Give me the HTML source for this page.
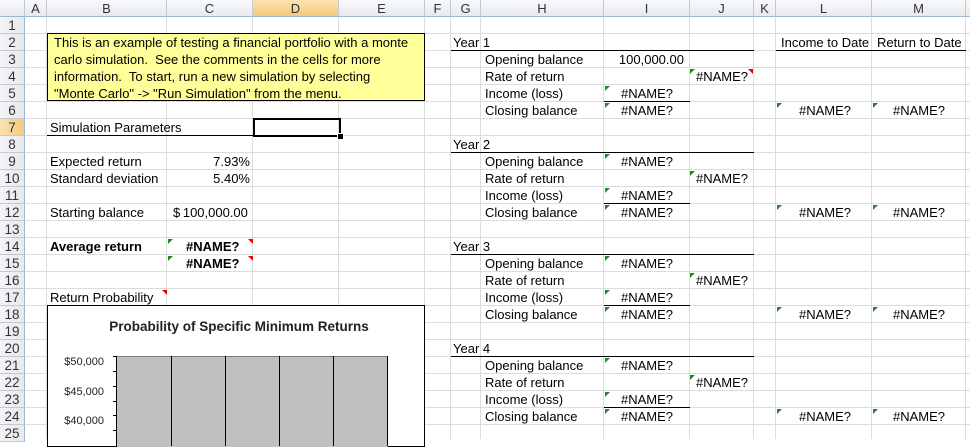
<!DOCTYPE html>
<html><head><meta charset="utf-8"><style>
body{margin:0;width:970px;height:439px;overflow:hidden;background:#fff;font-family:"Liberation Sans",Arial,sans-serif;position:relative}
.a{position:absolute}
.t{position:absolute;height:17px;line-height:17px;font-size:13px;white-space:nowrap;color:#000}
.b{font-weight:bold}
.vl{position:absolute;top:17px;bottom:0;width:1px;background:#dadcdd}
.hd{position:absolute;top:0;height:17px;line-height:17px;font-size:13px;text-align:center;color:#333;background:linear-gradient(#f9fafb,#e6e9ee);border-right:1px solid #c5c9cf;border-bottom:1px solid #9eb6ce;box-sizing:border-box}
.rh{position:absolute;left:0;width:25px;height:17px;line-height:17px;font-size:13.5px;text-align:center;color:#333;background:linear-gradient(90deg,#f3f4f6,#e6e9ee);border-right:1px solid #9eb6ce;border-bottom:1px solid #c5c9cf;box-sizing:border-box}
.g{position:absolute;width:0;height:0;border-top:5px solid #218a21;border-right:5px solid transparent}
.r{position:absolute;width:0;height:0;border-top:5px solid #e00;border-left:5px solid transparent}
.ln{position:absolute;height:1px;background:#000}
.yl{position:absolute;left:50px;width:54px;text-align:right;font-size:11px;line-height:12px;color:#222}
</style></head><body>
<div class="a" style="left:0;top:17px;width:970px;height:422px;background:repeating-linear-gradient(#fff 0,#fff 16px,#dadcdd 16px,#dadcdd 17px)"></div>
<div class="vl" style="left:46px"></div><div class="vl" style="left:166px"></div><div class="vl" style="left:252px"></div><div class="vl" style="left:338px"></div><div class="vl" style="left:424px"></div><div class="vl" style="left:450px"></div><div class="vl" style="left:480px"></div><div class="vl" style="left:603px"></div><div class="vl" style="left:689px"></div><div class="vl" style="left:753px"></div><div class="vl" style="left:775px"></div><div class="vl" style="left:871px"></div><div class="vl" style="left:965px"></div>

<div class="hd" style="left:0;width:25px"></div>
<div class="hd" style="left:25px;width:22px">A</div>
<div class="hd" style="left:47px;width:120px">B</div>
<div class="hd" style="left:167px;width:86px">C</div>
<div class="hd" style="left:253px;width:86px;background:linear-gradient(#fbe3b2,#f5c97b)">D</div>
<div class="hd" style="left:339px;width:86px">E</div>
<div class="hd" style="left:425px;width:26px">F</div>
<div class="hd" style="left:451px;width:30px">G</div>
<div class="hd" style="left:481px;width:123px">H</div>
<div class="hd" style="left:604px;width:86px">I</div>
<div class="hd" style="left:690px;width:64px">J</div>
<div class="hd" style="left:754px;width:22px">K</div>
<div class="hd" style="left:776px;width:96px">L</div>
<div class="hd" style="left:872px;width:94px">M</div>
<div class="hd" style="left:966px;width:10px"></div>

<div class="rh" style="top:17px">1</div><div class="rh" style="top:34px">2</div><div class="rh" style="top:51px">3</div><div class="rh" style="top:68px">4</div><div class="rh" style="top:85px">5</div><div class="rh" style="top:102px">6</div><div class="rh" style="top:119px;background:linear-gradient(90deg,#fbe3b2,#f5c97b)">7</div><div class="rh" style="top:136px">8</div><div class="rh" style="top:153px">9</div><div class="rh" style="top:170px">10</div><div class="rh" style="top:187px">11</div><div class="rh" style="top:204px">12</div><div class="rh" style="top:221px">13</div><div class="rh" style="top:238px">14</div><div class="rh" style="top:255px">15</div><div class="rh" style="top:272px">16</div><div class="rh" style="top:289px">17</div><div class="rh" style="top:306px">18</div><div class="rh" style="top:323px">19</div><div class="rh" style="top:340px">20</div><div class="rh" style="top:357px">21</div><div class="rh" style="top:374px">22</div><div class="rh" style="top:391px">23</div><div class="rh" style="top:408px">24</div><div class="rh" style="top:425px">25</div>

<!-- yellow note -->
<div class="a" style="left:47px;top:33px;background:#ffff99;border:1px solid #000;font-size:13px;line-height:17px;padding:0 0 0 6px;box-sizing:border-box;width:378px;height:68px;white-space:nowrap;overflow:hidden">This is an example of testing a financial portfolio with a monte<br>carlo simulation.&nbsp; See the comments in the cells for more<br>information.&nbsp; To start, run a new simulation by selecting<br>"Monte Carlo" -&gt; "Run Simulation" from the menu.</div>

<div class="t" style="left:50px;top:119px">Simulation Parameters</div>
<div class="ln" style="left:47px;top:135px;width:206px"></div>
<div class="a" style="left:253px;top:118px;width:84px;height:15px;border:2px solid #000"></div>
<div class="a" style="left:337px;top:133px;width:5px;height:5px;background:#000;border:1px solid #fff"></div>
<div class="t" style="left:50px;top:153px">Expected return</div><div class="t" style="right:720px;top:153px">7.93%</div>
<div class="t" style="left:50px;top:170px">Standard deviation</div><div class="t" style="right:720px;top:170px">5.40%</div>
<div class="t" style="left:50px;top:204px">Starting balance</div><div class="t" style="left:173px;top:204px">$&thinsp;100,000.00</div>
<div class="t b" style="left:50px;top:238px">Average return</div><div class="t b" style="left:186px;top:238px">#NAME?</div>
<div class="g" style="left:168px;top:239px"></div><div class="r" style="left:248px;top:239px"></div>
<div class="t b" style="left:186px;top:255px">#NAME?</div>
<div class="g" style="left:168px;top:256px"></div><div class="r" style="left:248px;top:256px"></div>
<div class="t" style="left:50px;top:289px">Return Probability</div><div class="r" style="left:162px;top:290px"></div>

<!-- chart -->
<div class="a" style="left:47px;top:305px;width:376px;height:140px;background:#fff;border:1px solid #000"></div>
<div class="a b" style="left:47px;top:319px;width:384px;text-align:center;font-size:13.5px;color:#222">Probability of Specific Minimum Returns</div>
<div class="yl" style="top:356px">$50,000</div>
<div class="yl" style="top:386px">$45,000</div>
<div class="yl" style="top:415px">$40,000</div>
<div class="a" style="left:117px;top:356px;width:271px;height:90px;background:#c0c0c0;border-top:1px solid #808080"></div>
<div class="a" style="left:116px;top:356px;width:1px;height:90px;background:#000"></div>
<div class="a" style="left:113px;top:356px;width:4px;height:1px;background:#000"></div>
<div class="a" style="left:113px;top:371px;width:4px;height:1px;background:#000"></div>
<div class="a" style="left:113px;top:386px;width:4px;height:1px;background:#000"></div>
<div class="a" style="left:113px;top:401px;width:4px;height:1px;background:#000"></div>
<div class="a" style="left:113px;top:415px;width:4px;height:1px;background:#000"></div>
<div class="a" style="left:113px;top:430px;width:4px;height:1px;background:#000"></div>
<div class="a" style="left:171px;top:356px;width:1px;height:90px;background:#000"></div>
<div class="a" style="left:225px;top:356px;width:1px;height:90px;background:#000"></div>
<div class="a" style="left:279px;top:356px;width:1px;height:90px;background:#000"></div>
<div class="a" style="left:333px;top:356px;width:1px;height:90px;background:#000"></div>
<div class="a" style="left:387px;top:356px;width:1px;height:90px;background:#000"></div>

<!-- right headers -->
<div class="t" style="left:781px;top:34px">Income to Date</div>
<div class="t" style="left:877px;top:34px">Return to Date</div>
<div class="ln" style="left:776px;top:50px;width:190px"></div>

<!-- Year 1 -->
<div class="t" style="left:453px;top:34px">Year 1</div><div class="ln" style="left:451px;top:50px;width:303px"></div>
<div class="t" style="left:485px;top:51px">Opening balance</div><div class="t" style="right:286px;top:51px">100,000.00</div>
<div class="t" style="left:485px;top:68px">Rate of return</div><div class="t" style="left:696px;top:68px">#NAME?</div><div class="g" style="left:690px;top:69px"></div><div class="r" style="left:748px;top:69px"></div>
<div class="t" style="left:485px;top:85px">Income (loss)</div><div class="t" style="left:621px;top:85px">#NAME?</div><div class="g" style="left:605px;top:86px"></div><div class="ln" style="left:604px;top:101px;width:86px"></div>
<div class="t" style="left:485px;top:102px">Closing balance</div><div class="t" style="left:621px;top:102px">#NAME?</div><div class="g" style="left:605px;top:103px"></div>
<div class="t" style="left:799px;top:102px">#NAME?</div><div class="g" style="left:777px;top:103px"></div>
<div class="t" style="left:893px;top:102px">#NAME?</div><div class="g" style="left:873px;top:103px"></div>

<!-- Year 2 -->
<div class="t" style="left:453px;top:136px">Year 2</div><div class="ln" style="left:451px;top:152px;width:303px"></div>
<div class="t" style="left:485px;top:153px">Opening balance</div><div class="t" style="left:621px;top:153px">#NAME?</div><div class="g" style="left:605px;top:154px"></div>
<div class="t" style="left:485px;top:170px">Rate of return</div><div class="t" style="left:696px;top:170px">#NAME?</div><div class="g" style="left:690px;top:171px"></div>
<div class="t" style="left:485px;top:187px">Income (loss)</div><div class="t" style="left:621px;top:187px">#NAME?</div><div class="g" style="left:605px;top:188px"></div><div class="ln" style="left:604px;top:203px;width:86px"></div>
<div class="t" style="left:485px;top:204px">Closing balance</div><div class="t" style="left:621px;top:204px">#NAME?</div><div class="g" style="left:605px;top:205px"></div>
<div class="t" style="left:799px;top:204px">#NAME?</div><div class="g" style="left:777px;top:205px"></div>
<div class="t" style="left:893px;top:204px">#NAME?</div><div class="g" style="left:873px;top:205px"></div>

<!-- Year 3 -->
<div class="t" style="left:453px;top:238px">Year 3</div><div class="ln" style="left:451px;top:254px;width:303px"></div>
<div class="t" style="left:485px;top:255px">Opening balance</div><div class="t" style="left:621px;top:255px">#NAME?</div><div class="g" style="left:605px;top:256px"></div>
<div class="t" style="left:485px;top:272px">Rate of return</div><div class="t" style="left:696px;top:272px">#NAME?</div><div class="g" style="left:690px;top:273px"></div>
<div class="t" style="left:485px;top:289px">Income (loss)</div><div class="t" style="left:621px;top:289px">#NAME?</div><div class="g" style="left:605px;top:290px"></div><div class="ln" style="left:604px;top:305px;width:86px"></div>
<div class="t" style="left:485px;top:306px">Closing balance</div><div class="t" style="left:621px;top:306px">#NAME?</div><div class="g" style="left:605px;top:307px"></div>
<div class="t" style="left:799px;top:306px">#NAME?</div><div class="g" style="left:777px;top:307px"></div>
<div class="t" style="left:893px;top:306px">#NAME?</div><div class="g" style="left:873px;top:307px"></div>

<!-- Year 4 -->
<div class="t" style="left:453px;top:340px">Year 4</div><div class="ln" style="left:451px;top:356px;width:303px"></div>
<div class="t" style="left:485px;top:357px">Opening balance</div><div class="t" style="left:621px;top:357px">#NAME?</div><div class="g" style="left:605px;top:358px"></div>
<div class="t" style="left:485px;top:374px">Rate of return</div><div class="t" style="left:696px;top:374px">#NAME?</div><div class="g" style="left:690px;top:375px"></div>
<div class="t" style="left:485px;top:391px">Income (loss)</div><div class="t" style="left:621px;top:391px">#NAME?</div><div class="g" style="left:605px;top:392px"></div><div class="ln" style="left:604px;top:407px;width:86px"></div>
<div class="t" style="left:485px;top:408px">Closing balance</div><div class="t" style="left:621px;top:408px">#NAME?</div><div class="g" style="left:605px;top:409px"></div>
<div class="t" style="left:799px;top:408px">#NAME?</div><div class="g" style="left:777px;top:409px"></div>
<div class="t" style="left:893px;top:408px">#NAME?</div><div class="g" style="left:873px;top:409px"></div>
</body></html>
